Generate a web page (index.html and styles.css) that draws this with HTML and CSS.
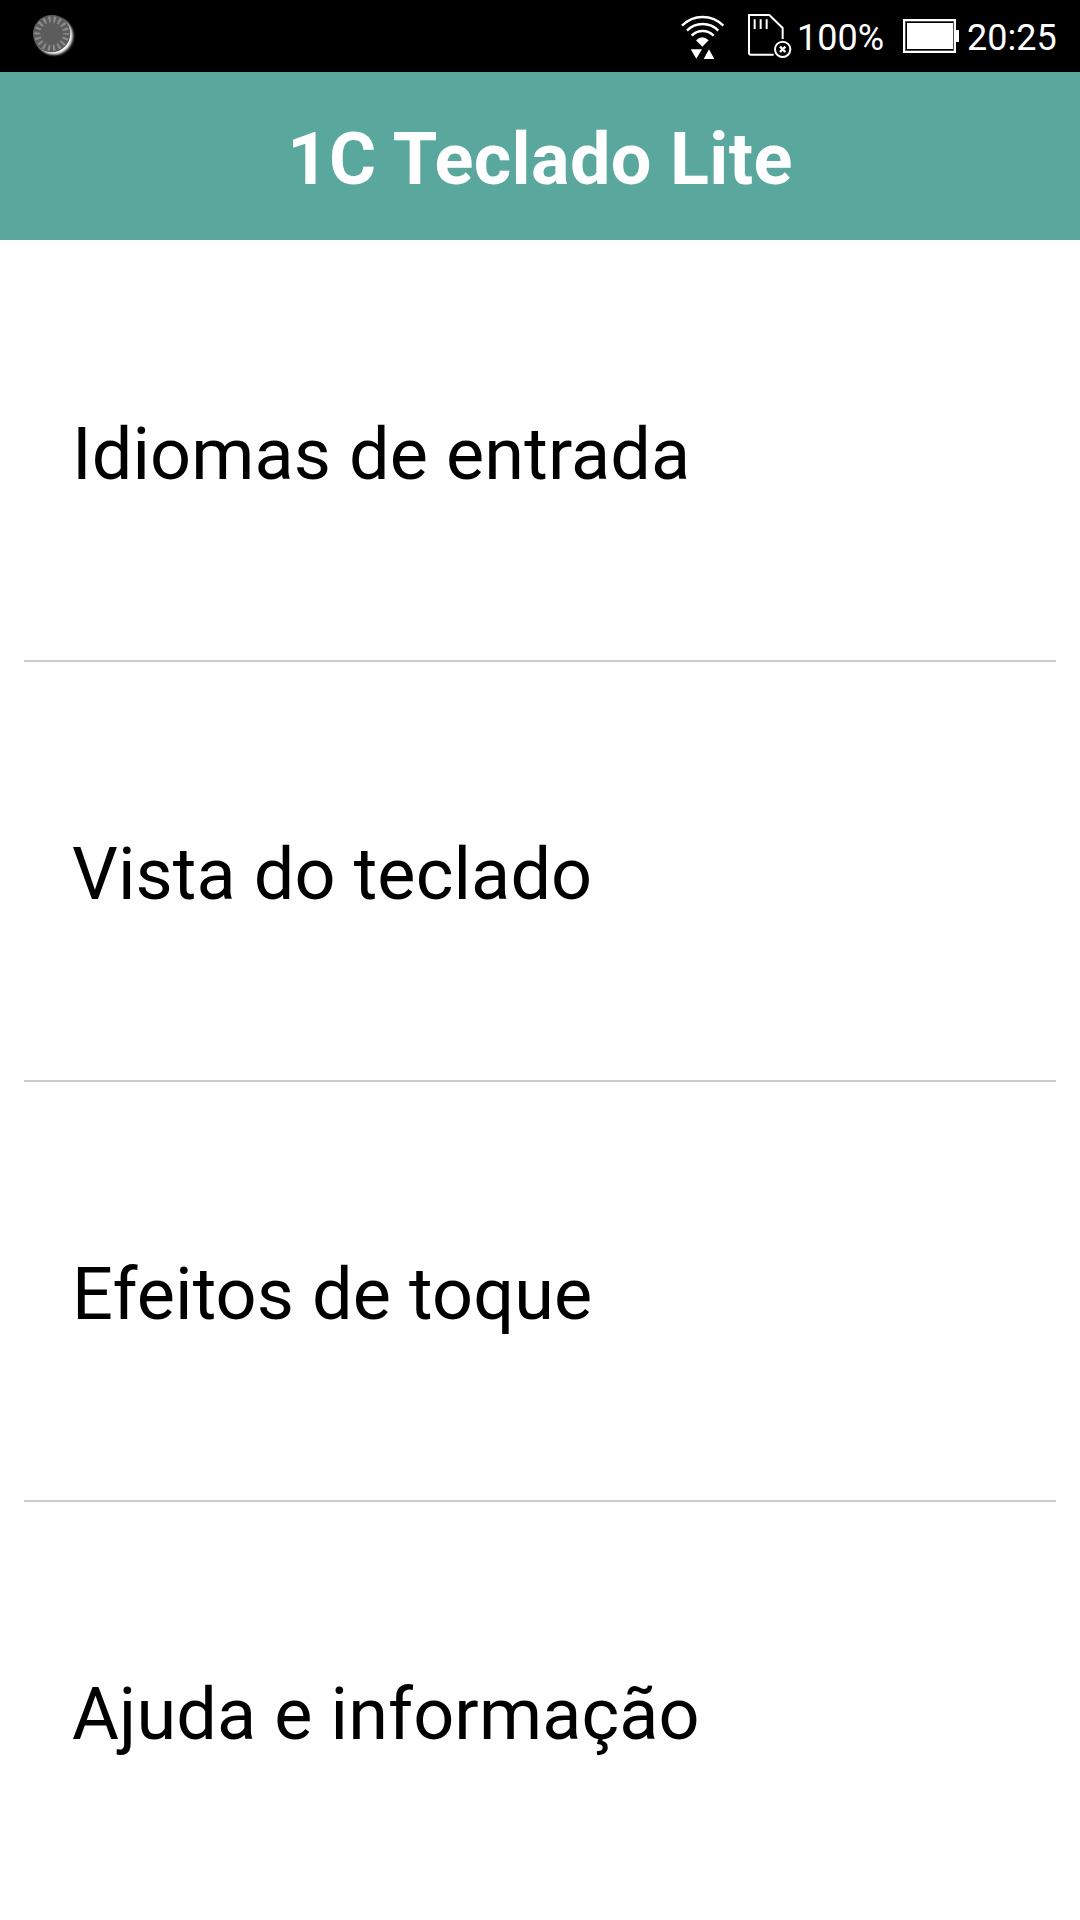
FILE: index.html
```html
<!DOCTYPE html>
<html lang="pt">
<head>
  <meta charset="utf-8">
  <title>1C Teclado Lite</title>
  <link rel="stylesheet" href="styles.css">
</head>
<body>
  <div class="status-bar">
    <svg class="spinner-icon" viewBox="0 0 210 216">
      <defs>
        <filter id="soft"><feGaussianBlur stdDeviation="3" /></filter>
      </defs>
      <circle cx="105" cy="109" r="57" fill="#444" filter="url(#soft)" />
      <circle cx="101" cy="107" r="56" fill="#fff" filter="url(#soft)" />
      <circle cx="95" cy="101" r="56" fill="#5c5c5c" />
      <circle cx="95" cy="101" r="43" fill="none" stroke="#8c8c8c" stroke-width="18" stroke-dasharray="6 9.01" stroke-dashoffset="3" />
    </svg>
    <div class="status-right">
      <svg class="wifi-icon" viewBox="30 0 138 216">
        <g fill="none" stroke="#fff" stroke-width="7">
          <path d="M36 77Q62 51 98 51T160 77" />
          <path d="M51 92Q70 72 98 72T145 92" />
          <path d="M65 107Q79 93 98 93T131 107" />
        </g>
        <path d="M78 121Q97 102 116 121L97 140z" fill="#fff" />
        <path d="M62 148h34l-17 28zM101 177h32l-16-29z" fill="#fff" />
      </svg>
      <svg class="sd-icon" viewBox="228 0 138 216">
        <g fill="none" stroke="#fff" stroke-width="6">
          <path d="M311 164H243Q237 164 237 158V45H298L338 84V117" />
          <path d="M254 58v29M272 58v29M290 58v29" />
          <circle cx="338" cy="148" r="23" />
          <path d="M330 140l16 16M346 140l-16 16" stroke-width="7" />
        </g>
      </svg>
      <span class="battery-level">100%</span>
      <svg class="battery-icon" viewBox="336 0 174 216">
        <rect x="342" y="60" width="153" height="96" fill="none" stroke="#fff" stroke-width="6" />
        <rect x="346" y="64" width="145" height="88" fill="none" stroke="#777" stroke-width="2" />
        <rect x="351" y="69" width="138" height="78" fill="#fff" />
        <rect x="498" y="90" width="9" height="36" fill="#fff" />
      </svg>
      <span class="clock">20:25</span>
    </div>
  </div>

  <div class="header">
    <h1>1C Teclado Lite</h1>
  </div>

  <ul class="menu">
    <li>Idiomas de entrada</li>
    <li>Vista do teclado</li>
    <li>Efeitos de toque</li>
    <li>Ajuda e informação</li>
  </ul>
</body>
</html>
```
FILE: styles.css
```css
body {
  margin: 0;
  height: 1920px;
  overflow: hidden;
  background-color: #fefefe;
  font-family: Roboto, sans-serif;
}

.status-bar {
  display: flex;
  justify-content: space-between;
  height: 72px;
  padding: 0 24px 0 20px;
  background-color: #000;
  color: #fff;
  font-size: 36px;
  line-height: 77px;
}

.status-bar svg {
  display: block;
  flex: none;
  height: 72px;
}

.spinner-icon {
  width: 70px;
}

.status-right {
  display: flex;
}

.wifi-icon {
  width: 46px;
}

.sd-icon {
  width: 46px;
  margin-left: 20px;
}

.battery-level {
  width: 105px;
  margin-left: 5px;
}

.battery-icon {
  width: 58px;
}

.clock {
  width: 89px;
  margin-left: 7px;
}

.header {
  height: 168px;
  background-color: #5aa89d;
  text-align: center;
}

.header h1 {
  margin: 0;
  padding-top: 46px;
  color: #fff;
  font-size: 72px;
  font-weight: bold;
  letter-spacing: 0.35px;
  line-height: 84px;
}

.menu {
  list-style: none;
  margin: 0;
  padding: 2px 24px 0;
}

.menu li {
  box-sizing: border-box;
  height: 420px;
  padding: 171px 48px 0;
  border-bottom: 2px solid #ccc;
  color: #000;
  font-size: 72px;
  letter-spacing: 0.12px;
  line-height: 84px;
}

.menu li:last-child {
  border-bottom: none;
}
```
